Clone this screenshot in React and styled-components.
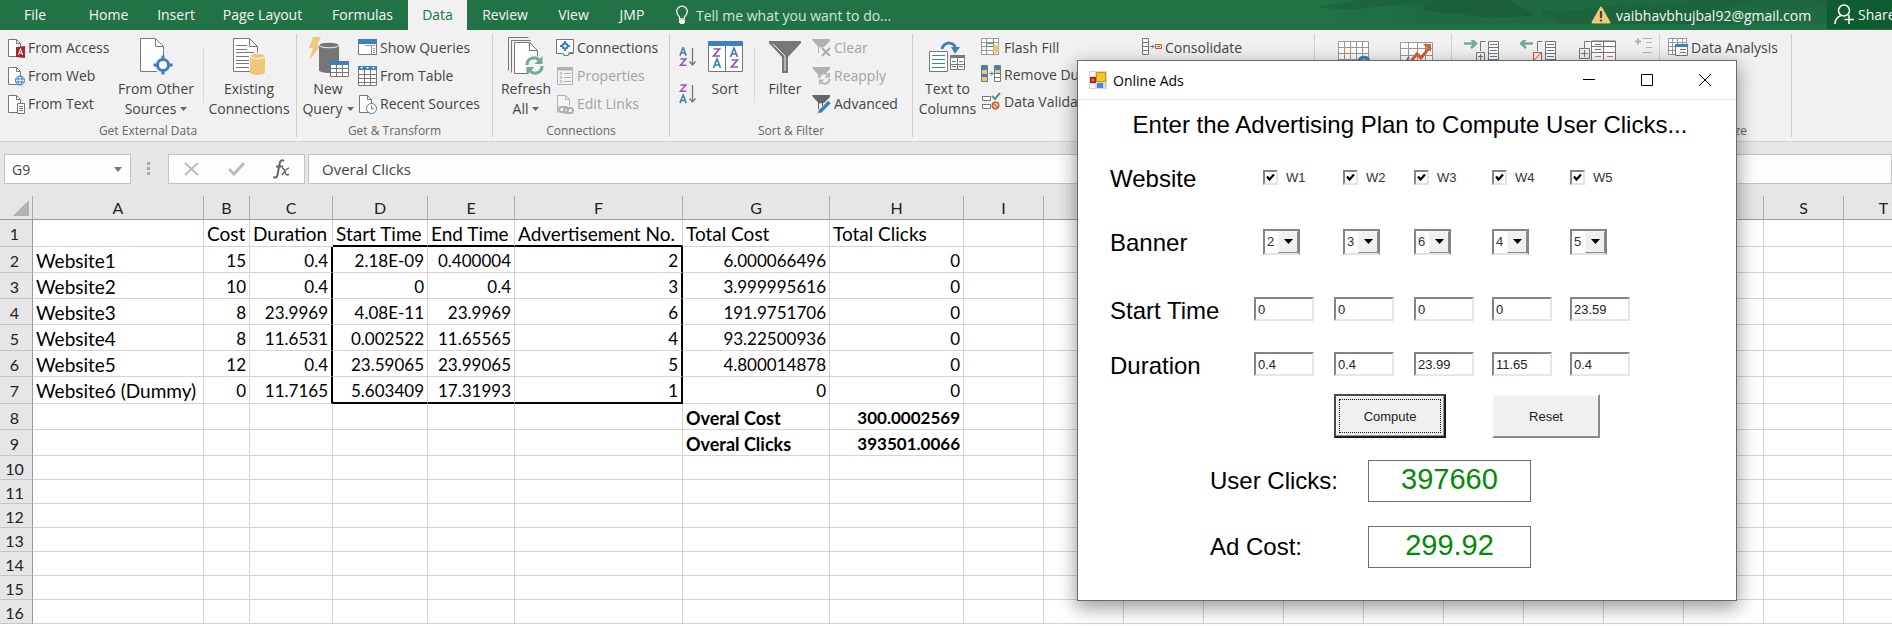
import React from "react";
import styled, { createGlobalStyle, css } from "styled-components";

const UI = `"Open Sans", "Noto Sans", sans-serif`;
const SHEET = `Lato, "Open Sans", sans-serif`;
const FORM = `"Liberation Sans", Arial, sans-serif`;
const GREEN = "#217346";

const GlobalStyle = createGlobalStyle`
  *, *::before, *::after { box-sizing: border-box; }
  body { margin: 0; background: #fff; }
  button, input, select { font: inherit; color: inherit; margin: 0; }
`;

const Page = styled.div`
  position: relative;
  height: 100vh;
  overflow: hidden;
  font-family: ${UI};
  font-size: 14px;
  color: #444;
  background: #fff;
`;

/* ---------- tab strip ---------- */

const TabStrip = styled.header`
  display: flex;
  position: relative;
  height: 30px;
  background: ${GREEN};
  color: #f3f8f5;
`;

const Backdrop = styled.svg`
  position: absolute;
  right: 0;
  top: 0;
`;

const Tabs = styled.nav`
  display: flex;
`;

const Tab = styled.button`
  width: ${(p) => p.$w}px;
  padding: 0;
  border: 0;
  line-height: 30px;
  white-space: nowrap;
  background: ${(p) => (p.$active ? "#f1f1f1" : "transparent")};
  color: ${(p) => (p.$active ? GREEN : "#f3f8f5")};
  ${(p) => p.$file && css`margin-right: 3px;`}
`;

const TellMe = styled.button`
  display: flex;
  align-items: center;
  gap: 8px;
  margin-left: 16px;
  padding: 0;
  border: 0;
  background: transparent;
  color: #d3e6da;
`;

const Account = styled.div`
  position: relative;
  display: flex;
  align-items: center;
  margin-left: auto;
  gap: 5px;
  white-space: nowrap;
`;

const Email = styled.span`
  margin-right: 6px;
  width: 200px;
`;

const Share = styled.button`
  display: flex;
  align-items: center;
  gap: 4px;
  width: 65px;
  height: 29px;
  padding: 0 0 0 7px;
  margin-bottom: 1px;
  border: 0;
  overflow: hidden;
  background: #0e5c2f;
  color: #f3f8f5;
  & > svg { flex: none; }
`;

/* ---------- ribbon ---------- */

const RibbonBar = styled.section`
  display: flex;
  height: 112px;
  padding-top: 4px;
  background: #f1f1f1;
  border-bottom: 1px solid #d2d2d2;
`;

const GroupBox = styled.div`
  display: flex;
  flex-direction: column;
  flex: none;
  width: ${(p) => p.$w}px;
  height: 103px;
  border-right: 1px solid #d0d0d0;
`;

const GroupBody = styled.div`
  display: flex;
  align-items: flex-start;
  flex: none;
  height: 89px;
  padding-left: ${(p) => p.$left || 0}px;
`;

const GroupLabel = styled.div`
  text-align: center;
  font-size: 12px;
  line-height: 16px;
  color: #666;
`;

const Stack = styled.div`
  display: flex;
  flex-direction: column;
  flex: none;
  width: ${(p) => p.$w}px;
`;

const SmallBtn = styled.button`
  display: flex;
  align-items: center;
  gap: 3px;
  height: ${(p) => (p.$tight ? 27 : 28)}px;
  padding: 0 0 1px;
  border: 0;
  background: transparent;
  white-space: nowrap;
  color: ${(p) => (p.$off ? "#a3a3a3" : "#444")};
  & > svg { flex: none; }
`;

const LargeBtn = styled.button`
  display: flex;
  flex-direction: column;
  align-items: center;
  flex: none;
  width: ${(p) => p.$w}px;
  padding: 0;
  border: 0;
  background: transparent;
  line-height: 20px;
  white-space: nowrap;
`;

const LargeArt = styled.span`
  display: flex;
  align-items: center;
  height: 45px;
`;

const Split = styled.div`
  flex: none;
  width: 1px;
  height: 55px;
  margin: 14px 3px 0;
  background: #dadada;
`;

const IconBtn = styled.button`
  display: flex;
  align-items: center;
  height: ${(p) => p.$h}px;
  padding: 0;
  border: 0;
  background: transparent;
`;

const ArtBtn = styled.button`
  display: flex;
  justify-content: center;
  flex: none;
  width: ${(p) => p.$w}px;
  padding: ${(p) => p.$top || 6}px 0 0;
  border: 0;
  background: transparent;
`;

/* ---------- formula bar ---------- */

const FormulaBar = styled.section`
  display: flex;
  height: 54px;
  padding: 12px 0 12px 4px;
  background: #e6e6e6;
`;

const Field = styled.div`
  display: flex;
  align-items: center;
  flex: ${(p) => (p.$w ? "none" : 1)};
  width: ${(p) => (p.$w ? p.$w + "px" : "auto")};
  height: 30px;
  border: 1px solid #c3c3c3;
  background: #fdfdfd;
`;

const NameInput = styled.input`
  width: 100px;
  padding: 0 0 0 7px;
  border: 0;
  background: transparent;
`;

const PlainButton = styled.button`
  display: flex;
  justify-content: center;
  align-items: center;
  flex: 1;
  padding: 0;
  border: 0;
  background: transparent;
`;

const FormulaInput = styled.input`
  flex: 1;
  padding: 0 0 0 13px;
  border: 0;
  background: transparent;
  font-size: 15px;
`;

const Grip = styled.svg`
  flex: none;
  margin: 8px 17px 0 15px;
`;

/* ---------- worksheet ---------- */

const COLS = [
  ["A", 171], ["B", 46], ["C", 83], ["D", 95], ["E", 87], ["F", 168], ["G", 147],
  ["H", 134], ["I", 80], ["J", 80], ["K", 80], ["L", 80], ["M", 80], ["N", 80],
  ["O", 80], ["P", 80], ["Q", 80], ["R", 80], ["S", 80], ["T", 80],
];
const SHEET_WIDTH = COLS.reduce((sum, c) => sum + c[1], 33);

const Sheet = styled.table`
  width: ${SHEET_WIDTH}px;
  table-layout: fixed;
  border-collapse: separate;
  border-spacing: 0;
  font-family: ${SHEET};
  line-height: 20px;
  color: #000;
`;

const ColHead = styled.th`
  height: 24px;
  padding: 0;
  border-right: 1px solid #ababab;
  border-bottom: 1px solid #9b9b9b;
  background: #e6e6e6;
  font-weight: 400;
  font-size: 16px;
  color: #222;
`;

const CornerArt = styled.svg`
  display: block;
  margin-left: 13px;
`;

const RowHead = styled.th`
  height: ${(p) => p.$h}px;
  padding: 2px 3px 0 0;
  border-right: 1px solid #9b9b9b;
  border-bottom: 1px solid #c6c6c6;
  background: #e6e6e6;
  font-weight: 400;
  font-size: 16px;
  color: #222;
`;

const Cell = styled.td`
  padding: 2px 3px 0;
  border-right: ${(p) => (p.$edgeR ? "2px solid #000" : "1px solid #d4d4d4")};
  border-bottom: ${(p) => (p.$edgeB ? "2px solid #000" : "1px solid #d4d4d4")};
  text-align: ${(p) => (p.$num ? "right" : "left")};
  font-size: ${(p) => (p.$num ? 17 : 19)}px;
  font-weight: ${(p) => (p.$bold ? 700 : 400)};
  white-space: nowrap;
  ${(p) => p.$bold && !p.$num && css`font-size: 18px;`}
`;

const ROWS = [
  [27, ["", "Cost", "Duration", "Start Time", "End Time", "Advertisement No.", "Total Cost", "Total Clicks"]],
  [26, ["Website1", "15", "0.4", "2.18E-09", "0.400004", "2", "6.000066496", "0"]],
  [26, ["Website2", "10", "0.4", "0", "0.4", "3", "3.999995616", "0"]],
  [26, ["Website3", "8", "23.9969", "4.08E-11", "23.9969", "6", "191.9751706", "0"]],
  [26, ["Website4", "8", "11.6531", "0.002522", "11.65565", "4", "93.22500936", "0"]],
  [26, ["Website5", "12", "0.4", "23.59065", "23.99065", "5", "4.800014878", "0"]],
  [27, ["Website6 (Dummy)", "0", "11.7165", "5.603409", "17.31993", "1", "0", "0"]],
  [26, ["", "", "", "", "", "", "Overal Cost", "300.0002569"], true],
  [26, ["", "", "", "", "", "", "Overal Clicks", "393501.0066"], true],
  [24, []], [24, []], [24, []], [24, []], [24, []], [24, []], [24, []],
];

/* ---------- dialog ---------- */

const Dialog = styled.section`
  position: absolute;
  left: 1077px;
  top: 60px;
  width: 660px;
  border: 1px solid #6a6a6a;
  background: #fff;
  box-shadow: 0 6px 18px 1px rgba(0, 0, 0, 0.4);
  color: #000;
`;

const TitleBar = styled.div`
  display: flex;
  align-items: center;
  height: 39px;
  padding: 0 2px 0 11px;
  border-bottom: 1px solid #e2e2e2;
`;

const DialogName = styled.h1`
  flex: 1;
  margin: 0 0 0 6px;
  font-size: 14px;
  font-weight: 400;
`;

const CaptionBtn = styled.button`
  display: flex;
  justify-content: center;
  align-items: center;
  width: 58px;
  height: 38px;
  padding: 0;
  border: 0;
  background: transparent;
`;

const AdForm = styled.form`
  padding-bottom: 23px;
  font-family: ${FORM};
  font-size: 24px;
`;

const Heading = styled.h2`
  margin: 0;
  padding-left: 6px;
  font-size: 24px;
  font-weight: 400;
  line-height: 49px;
  text-align: center;
  white-space: nowrap;
`;

const FormRow = styled.div`
  display: grid;
  grid-template-columns: ${(p) =>
    p.$narrow ? "153px 80px 71px 78px 78px 60px" : "144px 80px 80px 78px 78px 60px"};
  align-items: center;
  height: ${(p) => p.$h}px;
  margin-left: 32px;
`;

const RowName = styled.span`
  padding-top: 3px;
  white-space: nowrap;
`;

const CheckLabel = styled.label`
  display: flex;
  align-items: center;
  gap: 8px;
  font-size: 13px;
  color: #333;
`;

const Check = styled.input`
  appearance: none;
  width: 15px;
  height: 15px;
  border: 2px solid;
  border-color: #858585 #e3e3e3 #e3e3e3 #858585;
  background: #fff;
`;

const CheckWrap = styled.span`
  display: grid;
  & > * { grid-area: 1 / 1; }
  & > svg { z-index: 1; pointer-events: none; place-self: center; visibility: hidden; }
  & > input:checked + svg { visibility: visible; }
`;

const Combo = styled.span`
  display: grid;
  width: 37px;
  height: 26px;
  border: 2px solid;
  border-color: #858585 #858585 #e3e3e3 #858585;
  & > * { grid-area: 1 / 1; }
`;

const ComboSelect = styled.select`
  appearance: none;
  width: 33px;
  height: 22px;
  padding: 0 0 0 2px;
  border: 0;
  background: #fff;
  font-size: 13px;
  color: #333;
`;

const ComboArrow = styled.span`
  display: flex;
  justify-content: center;
  align-items: center;
  justify-self: end;
  width: 20px;
  height: 22px;
  border: 1px solid;
  border-color: #f4f4f4 #8a8a8a #8a8a8a #f4f4f4;
  background: #f0f0f0;
  pointer-events: none;
`;

const SmallInput = styled.input`
  width: 60px;
  height: 24px;
  padding: 0 0 0 2px;
  border: 2px solid;
  border-color: #858585 #e6e6e6 #e6e6e6 #858585;
  background: #fff;
  font-size: 13px;
  color: #222;
`;

const Buttons = styled.div`
  display: flex;
  align-items: center;
  gap: 46px;
  height: 58px;
  padding-left: 256px;
`;

const PushButton = styled.button`
  display: grid;
  width: ${(p) => (p.$focus ? 112 : 108)}px;
  height: 44px;
  padding: 2px;
  border: 2px solid;
  border-color: ${(p) => (p.$focus ? "#4a4a4a #1c1c1c #1c1c1c #4a4a4a" : "#fafafa #8a8a8a #8a8a8a #fafafa")};
  background: #f0f0f0;
  font-size: 13px;
  color: #222;
  box-shadow: ${(p) => (p.$focus ? "inset -1px -1px #999, inset 1px 1px #fff" : "none")};
`;

const FocusRing = styled.span`
  display: grid;
  place-items: center;
  margin: 1px;
  border: 1px ${(p) => (p.$on ? "dotted #111" : "solid transparent")};
`;

const ResultRow = styled.div`
  display: grid;
  grid-template-columns: 158px 163px;
  align-items: center;
  height: ${(p) => p.$h}px;
  padding-left: 132px;
`;

const Result = styled.output`
  height: 42px;
  border: 1px solid #6e6e6e;
  font-size: 29px;
  line-height: 37px;
  text-align: center;
  color: #068a06;
`;

/* ---------- icons ---------- */

const Svg = ({ w, h, children }) => (
  <svg width={w} height={h} viewBox={`0 0 ${w} ${h}`} fill="none" stroke="#777" strokeWidth="1" aria-hidden="true">
    {children}
  </svg>
);

const Page16 = ({ stroke = "#777", fill = "#fff" }) => (
  <g stroke={stroke}>
    <path fill={fill} d="M1.5 1.5h8l4 4v13h-12z" />
    <path d="M9.5 1.5v4h4" />
  </g>
);

const CaretArt = styled.svg`
  vertical-align: 3px;
`;

const Caret = () => (
  <CaretArt width="11" height="4" viewBox="0 0 11 4" aria-hidden="true">
    <path d="M4 0h7L7.500 4z" fill="#666" />
  </CaretArt>
);

const AccessIcon = () => (
  <Svg w={18} h={20}>
    <Page16 />
    <path d="M9 9l9-1v12l-9-1z" fill="#a4262c" stroke="none" />
    <path d="M11.500 17l2-6.500 2 6.500M12 15h3" stroke="#fff" />
  </Svg>
);
const WebIcon = () => (
  <Svg w={18} h={20}>
    <Page16 />
    <g stroke="#3f7fbf">
      <circle cx="13" cy="14.500" r="4.500" fill="#fff" />
      <ellipse cx="13" cy="14.500" rx="2" ry="4.500" />
      <path d="M8.500 13h9M8.500 16h9" />
    </g>
  </Svg>
);
const TextIcon = () => (
  <Svg w={18} h={20}>
    <Page16 />
    <path d="M10.500 9.500h7v10h-7z" fill="#fff" />
    <path d="M12 12.500h4M12 14.500h4M12 16.500h4" />
  </Svg>
);
const OtherSourcesIcon = () => (
  <Svg w={34} h={37}>
    <path d="M1.500.500h15l8 8v25h-23z" fill="#fff" />
    <path d="M16.500.500v8h8" />
    <circle cx="24" cy="27" r="9" fill="#f1f1f1" stroke="none" />
    <circle cx="24" cy="27" r="5.500" stroke="#3f7fbf" strokeWidth="3" fill="#fff" />
    <path d="M24 17.500v5M24 31.500v5M14.500 27h5M28.500 27h5" stroke="#3f7fbf" strokeWidth="3" />
  </Svg>
);
const Cylinder = ({ x, y, w, h, fill, top }) => (
  <g stroke="none">
    <path d={`M${x} ${y + 3}v${h - 6}c0 4 ${w} 4 ${w} 0v-${h - 6}z`} fill={fill} />
    <ellipse cx={x + w / 2} cy={y + 3} rx={w / 2} ry="2.800" fill={fill} stroke={top} />
  </g>
);
const ExistingIcon = () => (
  <Svg w={34} h={37}>
    <path d="M1.500.500h16l8 8v25h-24z" fill="#fff" />
    <path d="M17.500.500v8h8M4 7.500h11M4 11.500h11M4 14.500h18M4 18.500h13M4 22.500h13M4 25.500h13M4 29.500h13" />
    <Cylinder x={18} y={15} w={15} h={22} fill="#f0c67c" top="#fff" />
  </Svg>
);
const NewQueryIcon = () => (
  <Svg w={41} h={41}>
    <path d="M5 1h8l-4 8h4L1 24l4-12H1z" fill="#f0c67c" stroke="none" />
    <Cylinder x={11} y={6} w={20} h={31} fill="#767676" top="#f1f1f1" />
    <path d="M22.500 25.500h18v15h-18z" fill="#fff" />
    <path d="M22 25h19v4H22z" fill="#3f7fbf" stroke="none" />
    <path d="M22 32.500h19M22 36.500h19M28.500 29v12M34.500 29v12" />
  </Svg>
);
const ShowQueriesIcon = () => (
  <Svg w={19} h={18}>
    <path d="M.5.500h18v15h-18z" fill="#fff" />
    <path d="M0 0h19v5H0z" fill="#3f7fbf" stroke="none" />
    <path d="M13.500 7v8.500M15 9.500h2M15 11.500h2M15 13.500h2M7 6.500h10" stroke="#999" />
  </Svg>
);
const TableIcon = () => (
  <Svg w={19} h={20}>
    <path d="M.5.500h18v19h-18z" fill="#fff" />
    <path d="M0 0h19v4H0z" fill="#3f7fbf" stroke="none" />
    <path d="M2 1h3L3.500 3zM8 1h3L9.500 3zM14 1h3l-1.500 2z" fill="#fff" stroke="none" />
    <path d="M0 8.500h19M0 12.500h19M0 16.500h19M6.500 4v16M12.500 4v16" />
  </Svg>
);
const RecentIcon = () => (
  <Svg w={19} h={20}>
    <Page16 />
    <circle cx="13.500" cy="14.500" r="5" fill="#fff" stroke="#3f7fbf" />
    <path d="M13.500 11.500v3.500h2.500" />
  </Svg>
);
const SyncArrows = ({ color, x = 0, y = 0, s = 1 }) => (
  <g transform={`translate(${x} ${y}) scale(${s})`} stroke={color} strokeWidth="3">
    <path d="M2 9a7 7 0 0 1 12-5M17 10a7 7 0 0 1-12 5" />
    <path d="M17.500 0v8h-8zM1.500 19v-8h8z" fill={color} stroke="none" />
  </g>
);
const RefreshIcon = () => (
  <Svg w={38} h={39}>
    <path d="M1.500 33.500v-33h20M4.500 35.500v-32h19" />
    <path d="M7.500 5.500h15l8 8v23h-23z" fill="#fff" />
    <path d="M22.500 5.500v8h8" />
    <circle cx="28" cy="29" r="10" fill="#f1f1f1" stroke="none" />
    <SyncArrows color="#74a995" x={18} y={19} />
  </Svg>
);
const ConnectionsIcon = () => (
  <Svg w={18} h={18}>
    <path d="M.5.500h17v13H13l-1 3H8l-1-2H.500z" fill="#fff" />
    <path d="M0 14.500h7l2 2h3l2-2h4" />
    <circle cx="9" cy="7" r="2.500" stroke="#3f7fbf" strokeWidth="2" />
    <path d="M9 2v2M9 10v2M4 7h2M12 7h2" stroke="#3f7fbf" strokeWidth="2" />
  </Svg>
);
const PropertiesIcon = () => (
  <Svg w={18} h={18}>
    <g stroke="#b3b0b3">
      <path d="M1.500.500h15v17h-15z" fill="#f7f2f8" />
      <path d="M1 2h16" strokeWidth="3" />
      <circle cx="5" cy="6.500" r="1" /><circle cx="5" cy="10.500" r="1" /><circle cx="5" cy="14.500" r="1" />
      <path d="M8 6.500h7M8 10.500h7M8 14.500h7" />
    </g>
  </Svg>
);
const EditLinksIcon = () => (
  <Svg w={18} h={20}>
    <Page16 stroke="#b3b0b3" fill="#f7f2f8" />
    <path d="M2 12h16v8H2z" fill="#f1f1f1" stroke="none" />
    <g stroke="#b0b0b0" strokeWidth="2">
      <rect x="3" y="13" width="9" height="5" rx="2.500" />
      <rect x="8" y="14" width="9" height="5" rx="2.500" />
    </g>
  </Svg>
);
const LetterA = ({ x, y, s = 1 }) => (
  <path transform={`translate(${x} ${y}) scale(${s})`} d="M.5 9L4 0l3.500 9M2 6h4" stroke="#3f7fbf" strokeWidth="1.700" />
);
const LetterZ = ({ x, y, s = 1 }) => (
  <path transform={`translate(${x} ${y}) scale(${s})`} d="M.5 1h6L.500 8h6.500" stroke="#9356b8" strokeWidth="1.700" />
);
const SortAsc = ({ desc }) => (
  <Svg w={18} h={20}>
    {desc ? <LetterZ x={1} y={0} s={0.9} /> : <LetterA x={0.5} y={0.5} s={0.9} />}
    {desc ? <LetterA x={0.5} y={11} s={0.9} /> : <LetterZ x={1} y={11} s={0.9} />}
    <path d="M13.500 1v17M10.500 14.500l3 3.500 3-3.500" strokeWidth="1.300" />
  </Svg>
);
const SortIcon = () => (
  <Svg w={35} h={31}>
    <path d="M.5.500h34v30H.500z" fill="#fff" />
    <path d="M0 0h35v5H0z" fill="#3f7fbf" stroke="none" />
    <path d="M17.500 5v25" />
    <LetterZ x={5} y={7} /><LetterA x={5} y={18} />
    <LetterA x={22} y={7} /><LetterZ x={23} y={18} />
  </Svg>
);
const FilterIcon = () => (
  <Svg w={32} h={32}>
    <path d="M0 0h32v2L19 16v16h-6V16L0 2z" fill="#777" stroke="none" />
    <path d="M4 3l12 12v15" stroke="#f1f1f1" />
  </Svg>
);
const Funnel = ({ color }) => (
  <g stroke={color}>
    <path d="M0 1h18v2l-6 6-5 .500L1 3z" fill={color} stroke="none" />
    <path d="M6.500 8v7M10.500 9v3" />
  </g>
);
const ClearIcon = () => (
  <Svg w={19} h={20}><Funnel color="#b0b0b0" /><path d="M10 10l8 8M18 10l-8 8" stroke="#aaa" strokeWidth="2" /></Svg>
);
const ReapplyIcon = () => (
  <Svg w={19} h={20}><Funnel color="#b0b0b0" /><circle cx="12" cy="13" r="6" fill="#f1f1f1" stroke="none" /><SyncArrows color="#b4b4b4" x={6} y={6} s={0.68} /></Svg>
);
const AdvancedIcon = () => (
  <Svg w={19} h={20}><Funnel color="#666" /><path d="M17.500 8l-10 10" stroke="#3f7fbf" strokeWidth="3.500" /><path d="M8 15l2 2-5 3z" fill="#3f7fbf" stroke="none" /></Svg>
);
const TextColumnsIcon = () => (
  <Svg w={37} h={31}>
    <path d="M.5 10.500h18v20H.500z" fill="#fff" />
    <path d="M3 14.500h13M3 18.500h13M3 22.500h13M3 26.500h13" stroke="#3f7fbf" />
    <path d="M21.500 14.500h14v14h-14zM28.500 17v11M21 23.500h15" fill="#fff" />
    <path d="M21 14h15v3H21z" fill="#777" stroke="none" />
    <path d="M23 20.500h4M30 20.500h4M23 25.500h4M30 25.500h4" stroke="#3f7fbf" />
    <path d="M13 8c2-8 13-8 14 1" stroke="#3f7fbf" strokeWidth="3" />
    <path d="M22 6h9l-5 7z" fill="#3f7fbf" stroke="none" />
  </Svg>
);
const FlashFillIcon = () => (
  <Svg w={20} h={19}>
    <path d="M.5.500h17v16H.500zM0 4.500h18M0 8.500h18M0 12.500h18M5.500 0v17M12.500 0v17" fill="#fff" stroke="#999" />
    <path d="M5.500 5.500h7v3h-7z" stroke="#4e9a7c" fill="#fff" />
    <path d="M13 7h6l-2 4h2l-7 8 2-6h-2z" fill="#f0c67c" stroke="none" />
  </Svg>
);
const DuplicatesIcon = () => (
  <Svg w={20} h={18}>
    <path d="M.5.500h6v16h-6zM13.500.500h6v16h-6z" fill="#fff" />
    <path d="M1 1h5v4H1zM1 9h5v3H1z" fill="#3f7fbf" stroke="none" />
    <path d="M1 5h5v4H1zM1 12h5v4H1zM14 5h5v3h-5z" fill="#f0c67c" stroke="none" />
    <path d="M14 1h5v4h-5z" fill="#3f7fbf" stroke="none" />
    <path d="M14 8.500h5M14 12.500h5" />
    <path d="M8 8.500h4M10 6.500l2 2-2 2" stroke="#3f7fbf" />
  </Svg>
);
const ValidationIcon = () => (
  <Svg w={20} h={18}>
    <path d="M1.500 4.500h8v4h-8zM1.500 12.500h8v4h-8z" fill="#fff" />
    <path d="M11 4l3 3 5-6" stroke="#4e9a7c" strokeWidth="2" />
    <circle cx="14.500" cy="13.500" r="3.200" stroke="#d8512e" strokeWidth="1.500" />
    <path d="M12.500 11.500l4 4" stroke="#d8512e" strokeWidth="1.500" />
  </Svg>
);
const ConsolidateIcon = () => (
  <Svg w={20} h={18}>
    <path d="M.5.500h6v16h-6zM0 4.500h7M0 8.500h7M0 12.500h7" fill="#fff" />
    <path d="M8 8.500h3.500M10 6.500l2 2-2 2" stroke="#3f7fbf" />
    <path d="M13.500 6.500h6v4h-6zM15 8.500h3" stroke="#d8512e" />
  </Svg>
);
const WhatIfIcon = () => (
  <Svg w={32} h={30}>
    <path d="M.5.500h30v28H.500zM0 6.500h30M0 12.500h30M0 18.500h30M6.500 0v28M12.500 0v28M18.500 0v28M24.500 0v28" fill="#fff" stroke="#999" />
    <path d="M6.500 6.500h6v6h-6z" stroke="#e08a3c" fill="#fff" />
    <path d="M21 20c1-5 9-5 10 0" stroke="#3f7fbf" strokeWidth="3" />
  </Svg>
);
const ForecastIcon = () => (
  <Svg w={33} h={30}>
    <path d="M.5 1.500h32v28H.500zM0 7.500h33M0 14.500h33M8.500 1v28M17.500 1v28M25.500 1v28" fill="#fff" stroke="#999" />
    <path d="M11 20l6-7 4 4 9-11" stroke="#d65f3d" strokeWidth="3" />
    <path d="M23 3h8v8z" fill="#d65f3d" stroke="none" />
    <path d="M2 19l3 3 4-6" stroke="#3f7fbf" strokeWidth="2" />
  </Svg>
);
const OutlineIcon = ({ kind }) => (
  <Svg w={37} h={30}>
    {kind === "group" && <path d="M1 3.500h12M8 -1l5 4.500-5 4.500" stroke="#74a995" strokeWidth="2.500" />}
    {kind === "ungroup" && <path d="M1 3.500h12M6 -1L1 3.500 6 8" stroke="#74a995" strokeWidth="2.500" />}
    {kind === "subtotal" ? (
      <>
        <path d="M12.500 1v24h24V1zM12 6.500h25M12 12.500h25M24.500 1v24" fill="#fff" />
        <path d="M12 1.500h25" />
        <path d="M16 4.500h6M16 9.500h6" stroke="#3f7fbf" />
        <path d="M16 16.500h6M28 16.500h6" stroke="#d98244" />
        <path d="M.5 8.500h10v10H.500zM5.500 10v7M2 13.500h7M5.500 8V1.500h6" />
      </>
    ) : (
      <>
        <path d="M25.500 1.500h10v26h-10zM25 7.500h11M25 13.500h11M25 19.500h11" fill="#fff" />
        <path d="M27 4.500h7M27 10.500h7M27 16.500h7" stroke="#3f7fbf" />
        <path d="M17.500 11V1.500h5M13.500 12.500h8v8h-8z" />
        {kind === "group" ? <path d="M17.500 14v6M15 16.500h5" /> : <path d="M13.500 12.500h8v8h-8zM14 20l7-7" stroke="#d8512e" />}
      </>
    )}
  </Svg>
);
const DetailIcon = () => (
  <Svg w={17} h={17}>
    <path d="M0 4.500h6M3 1.500v6" stroke="#b3b3b3" strokeWidth="2" />
    <path d="M7 1.500h10M11 5.500h6M11 10.500h6M7 15.500h10" stroke="#b3b3b3" />
  </Svg>
);
const AnalysisIcon = () => (
  <Svg w={20} h={19}>
    <path d="M.5.500h18v16H.500zM0 4.500h18M0 8.500h18M0 12.500h18M4.500 0v17M9.500 0v17M14.500 0v17" fill="#fff" stroke="#999" />
    <path d="M7.500 6.500h12v11h-12z" fill="#fff" />
    <path d="M7 6h13v3H7z" fill="#3f7fbf" stroke="none" />
    <path d="M12 11.500h6M12 14.500h6" />
  </Svg>
);
const BulbIcon = () => (
  <Svg w={12} h={20}>
    <path d="M3.500 14v-2C1.500 10 .7 8.500.700 6.500a5.300 5.300 0 0 1 10.600 0c0 2-.8 3.500-2.800 5.500v2z" stroke="#f3f8f5" strokeWidth="1.300" />
    <path d="M3 15h6v3H3zM4 18h4v1H4z" fill="#fff" stroke="none" />
  </Svg>
);
const WarningIcon = () => (
  <Svg w={20} h={18}>
    <path d="M10 1.500L1.500 16.500h17z" fill="#f0c67c" stroke="#f0c67c" strokeWidth="2" strokeLinejoin="round" />
    <path d="M10 5v7M10 13.500v2" stroke="#444" strokeWidth="2.200" />
  </Svg>
);
const PersonIcon = () => (
  <Svg w={20} h={21}>
    <g stroke="#fff" strokeWidth="1.500">
      <circle cx="10" cy="6.500" r="5.500" />
      <path d="M1 20c0-4 2-7 6-8.500M15 11v9M10.500 15.500H20" />
    </g>
  </Svg>
);
const AppIcon = () => (
  <Svg w={18} h={18}>
    <path d="M0 0h18v18H0z" fill="#d5d5d8" stroke="none" />
    <path d="M1 1h5v4H1zM1 13h5v4H1z" fill="#fff" stroke="none" />
    <path d="M7.500 1.500h9v9h-9z" fill="#f5c526" stroke="#c48f10" />
    <path d="M1 6h6v6H1z" fill="#b3261a" stroke="none" />
    <path d="M3 8h2v2H3z" fill="#e88" stroke="none" />
    <path d="M8 12h6v5H8z" fill="#4a84e0" stroke="none" />
  </Svg>
);

/* ---------- parts ---------- */

const Small = ({ icon, children, ...rest }) => (
  <SmallBtn type="button" {...rest}>{icon}<span>{children}</span></SmallBtn>
);

const Large = ({ w, icon, line1, line2, menu }) => (
  <LargeBtn type="button" $w={w}>
    <LargeArt>{icon}</LargeArt>
    <span>{line1}</span>
    {line2 && <span>{line2}{menu && <Caret />}</span>}
  </LargeBtn>
);

const Group = ({ w, left, label, children }) => (
  <GroupBox $w={w}>
    <GroupBody $left={left}>{children}</GroupBody>
    {label && <GroupLabel>{label}</GroupLabel>}
  </GroupBox>
);

const TABS = [
  ["File", 70], ["Home", 71], ["Insert", 64], ["Page Layout", 109], ["Formulas", 91],
  ["Data", 59], ["Review", 76], ["View", 61], ["JMP", 56],
];

function TopBar() {
  return (
    <TabStrip>
      <Backdrop width="582" height="24" viewBox="0 0 582 24" aria-hidden="true">
        <defs>
          <linearGradient id="fade">
            <stop offset="0" stopColor="#1f6b41" stopOpacity="0" />
            <stop offset=".2" stopColor="#1f6b41" />
          </linearGradient>
        </defs>
        <path d="M0 0h582v24H0z" fill="url(#fade)" />
        <g fill="#1c6039">
          <path d="M8 7c20-4 26-3 40-7h100c-24 8-60 2-90 8-20 3-34 1-50-1z" opacity=".7" />
          <path d="M112 9c14 6 30 2 46 6s30 2 62 1c10-4-10-6-20-16H134c-14 3-22 4-22 9z" />
          <path d="M232 10c40 4 60-6 90-5s50-2 60-5h58c-30 8-20 18-50 24H250c-10-6-20-8-18-14z" opacity=".7" />
          <path d="M400 0h120c-10 12-70 12-120 0z" opacity=".6" />
        </g>
      </Backdrop>
      <Tabs>
        {TABS.map(([name, w]) => (
          <Tab key={name} type="button" $w={w} $active={name === "Data"} $file={name === "File"}>{name}</Tab>
        ))}
      </Tabs>
      <TellMe type="button"><BulbIcon /><span>Tell me what you want to do...</span></TellMe>
      <Account>
        <WarningIcon />
        <Email>vaibhavbhujbal92@gmail.com</Email>
        <Share type="button"><PersonIcon /><span>Share</span></Share>
      </Account>
    </TabStrip>
  );
}

function Ribbon() {
  return (
    <RibbonBar>
      <Group w={297} left={7} label="Get External Data">
        <Stack $w={105}>
          <Small icon={<AccessIcon />}>From Access</Small>
          <Small icon={<WebIcon />}>From Web</Small>
          <Small icon={<TextIcon />}>From Text</Small>
        </Stack>
        <Large w={88} icon={<OtherSourcesIcon />} line1="From Other" line2="Sources" menu />
        <Split />
        <Large w={84} icon={<ExistingIcon />} line1="Existing" line2="Connections" />
      </Group>
      <Group w={196} left={1} label="Get & Transform">
        <Large w={60} icon={<NewQueryIcon />} line1="New" line2="Query" menu />
        <Stack $w={134}>
          <Small icon={<ShowQueriesIcon />}>Show Queries</Small>
          <Small icon={<TableIcon />}>From Table</Small>
          <Small icon={<RecentIcon />}>Recent Sources</Small>
        </Stack>
      </Group>
      <Group w={177} left={3} label="Connections">
        <Large w={60} icon={<RefreshIcon />} line1="Refresh" line2="All" menu />
        <Stack $w={110}>
          <Small icon={<ConnectionsIcon />}>Connections</Small>
          <Small icon={<PropertiesIcon />} $off>Properties</Small>
          <Small icon={<EditLinksIcon />} $off>Edit Links</Small>
        </Stack>
      </Group>
      <Group w={243} left={9} label="Sort & Filter">
        <Stack $w={20}>
          <IconBtn type="button" $h={46} aria-label="Sort A to Z"><SortAsc /></IconBtn>
          <IconBtn type="button" $h={28} aria-label="Sort Z to A"><SortAsc desc /></IconBtn>
        </Stack>
        <Large w={52} icon={<SortIcon />} line1="Sort" />
        <Split />
        <Large w={54} icon={<FilterIcon />} line1="Filter" />
        <Stack $w={98}>
          <Small icon={<ClearIcon />} $off>Clear</Small>
          <Small icon={<ReapplyIcon />} $off>Reapply</Small>
          <Small icon={<AdvancedIcon />}>Advanced</Small>
        </Stack>
      </Group>
      <Group w={402} left={1}>
        <Large w={67} icon={<TextColumnsIcon />} line1="Text to" line2="Columns" />
        <Stack $w={161}>
          <Small $tight icon={<FlashFillIcon />}>Flash Fill</Small>
          <Small $tight icon={<DuplicatesIcon />}>Remove Duplicates</Small>
          <Small $tight icon={<ValidationIcon />}>Data Validation</Small>
        </Stack>
        <Stack $w={130}>
          <Small $tight icon={<ConsolidateIcon />}>Consolidate</Small>
        </Stack>
      </Group>
      <Group w={137} left={8}>
        <ArtBtn type="button" $w={62} aria-label="What-If Analysis" $top={7}><WhatIfIcon /></ArtBtn>
        <ArtBtn type="button" $w={62} aria-label="Forecast Sheet" $top={7}><ForecastIcon /></ArtBtn>
      </Group>
      <Group w={208}>
        <ArtBtn type="button" $w={58} aria-label="Group"><OutlineIcon kind="group" /></ArtBtn>
        <ArtBtn type="button" $w={56} aria-label="Ungroup"><OutlineIcon kind="ungroup" /></ArtBtn>
        <ArtBtn type="button" $w={62} aria-label="Subtotal"><OutlineIcon kind="subtotal" /></ArtBtn>
        <ArtBtn type="button" $w={31} aria-label="Show Detail" $top={3}><DetailIcon /></ArtBtn>
      </Group>
      <Group w={132} left={8} label="Analyze">
        <Stack $w={120}>
          <Small $tight icon={<AnalysisIcon />}>Data Analysis</Small>
        </Stack>
      </Group>
    </RibbonBar>
  );
}

function Formula() {
  return (
    <FormulaBar>
      <Field $w={127}>
        <NameInput aria-label="Name box" defaultValue="G9" />
        <PlainButton type="button" aria-label="Names">
          <svg width="8" height="5"><path d="M0 0h8L4 5z" fill="#777" /></svg>
        </PlainButton>
      </Field>
      <Grip width="5" height="14"><path d="M1 0h3v3H1zM1 5h3v3H1zM1 10h3v3H1z" fill="#aaa" /></Grip>
      <Field $w={137}>
        <PlainButton type="button" aria-label="Cancel">
          <svg width="16" height="14"><path d="M1 1l13 12M14 1L1 13" stroke="#bdbdbd" strokeWidth="2" fill="none" /></svg>
        </PlainButton>
        <PlainButton type="button" aria-label="Enter">
          <svg width="17" height="14"><path d="M1 7l5 5L16 1" stroke="#bdbdbd" strokeWidth="3" fill="none" /></svg>
        </PlainButton>
        <PlainButton type="button" aria-label="Insert function">
          <svg width="18" height="20" fill="none" stroke="#666">
            <path d="M11 2c-2-2-4 0-4.500 3L4.500 16c-.5 2.500-2 3-4 2M3 7.500h7" strokeWidth="2" />
            <path d="M9 9c2 0 2 1 3 4s1.500 3.500 4 2.500M16 9c-2 0-4 3-7 7" strokeWidth="1.500" />
          </svg>
        </PlainButton>
      </Field>
      <svg width="3" height="1" aria-hidden="true" />
      <Field>
        <FormulaInput aria-label="Formula" defaultValue="Overal Clicks" />
      </Field>
    </FormulaBar>
  );
}

function Worksheet() {
  return (
    <Sheet>
      <colgroup>
        <col style={{ width: 33 }} />
        {COLS.map(([c, w]) => <col key={c} style={{ width: w }} />)}
      </colgroup>
      <thead>
        <tr>
          <ColHead aria-label="Select all">
            <CornerArt width="16" height="16"><path d="M16 0v16H0z" fill="#b2b2b2" /></CornerArt>
          </ColHead>
          {COLS.map(([c]) => <ColHead key={c} scope="col">{c}</ColHead>)}
        </tr>
      </thead>
      <tbody>
        {ROWS.map(([h, values, bold], r) => (
          <tr key={r}>
            <RowHead scope="row" $h={h}>{r + 1}</RowHead>
            {COLS.map(([c], i) => {
              const boxedRow = r >= 1 && r <= 6;
              const boxedCol = i >= 3 && i <= 5;
              return (
                <Cell
                  key={c}
                  $num={r > 0 && /^\d/.test(values[i] || "")}
                  $bold={bold}
                  $edgeR={boxedRow && (i === 2 || i === 5)}
                  $edgeB={boxedCol && (r === 0 || r === 6)}
                >
                  {values[i]}
                </Cell>
              );
            })}
          </tr>
        ))}
      </tbody>
    </Sheet>
  );
}

const BANNERS = ["2", "3", "6", "4", "5"];
const STARTS = ["0", "0", "0", "0", "23.59"];
const DURATIONS = ["0.4", "0.4", "23.99", "11.65", "0.4"];

function OnlineAds() {
  return (
    <Dialog role="dialog" aria-label="Online Ads">
      <TitleBar>
        <AppIcon />
        <DialogName>Online Ads</DialogName>
        <CaptionBtn type="button" aria-label="Minimize">
          <svg width="12" height="12"><path d="M0 5.500h12" stroke="#000" /></svg>
        </CaptionBtn>
        <CaptionBtn type="button" aria-label="Maximize">
          <svg width="12" height="12"><path d="M.5.500h11v11H.500z" stroke="#000" fill="none" /></svg>
        </CaptionBtn>
        <CaptionBtn type="button" aria-label="Close">
          <svg width="12" height="12"><path d="M0 0l12 12M12 0L0 12" stroke="#000" /></svg>
        </CaptionBtn>
      </TitleBar>
      <AdForm onSubmit={(e) => e.preventDefault()}>
        <Heading>Enter the Advertising Plan to Compute User Clicks...</Heading>
        <FormRow $h={57} $narrow>
          <RowName>Website</RowName>
          {BANNERS.map((_, i) => (
            <CheckLabel key={i}>
              <CheckWrap>
                <Check type="checkbox" defaultChecked />
                <svg width="9" height="9"><path d="M1 3.500l2.500 3L8 1.500" stroke="#000" strokeWidth="2.200" fill="none" /></svg>
              </CheckWrap>
              W{i + 1}
            </CheckLabel>
          ))}
        </FormRow>
        <FormRow $h={71} $narrow>
          <RowName>Banner</RowName>
          {BANNERS.map((v, i) => (
            <Combo key={i}>
              <ComboSelect aria-label={`Banner W${i + 1}`} defaultValue={v}>
                {["1", "2", "3", "4", "5", "6"].map((n) => <option key={n}>{n}</option>)}
              </ComboSelect>
              <ComboArrow><svg width="9" height="5"><path d="M0 0h9L4.500 5z" fill="#000" /></svg></ComboArrow>
            </Combo>
          ))}
        </FormRow>
        <FormRow $h={64}>
          <RowName>Start Time</RowName>
          {STARTS.map((v, i) => <SmallInput key={i} aria-label={`Start Time W${i + 1}`} defaultValue={v} />)}
        </FormRow>
        <FormRow $h={46}>
          <RowName>Duration</RowName>
          {DURATIONS.map((v, i) => <SmallInput key={i} aria-label={`Duration W${i + 1}`} defaultValue={v} />)}
        </FormRow>
        <Buttons>
          <PushButton type="submit" $focus><FocusRing $on>Compute</FocusRing></PushButton>
          <PushButton type="reset"><FocusRing>Reset</FocusRing></PushButton>
        </Buttons>
        <ResultRow $h={72}>
          <label htmlFor="clicks">User Clicks:</label>
          <Result id="clicks">397660</Result>
        </ResultRow>
        <ResultRow $h={60}>
          <label htmlFor="cost">Ad Cost:</label>
          <Result id="cost">299.92</Result>
        </ResultRow>
      </AdForm>
    </Dialog>
  );
}

export default function App() {
  return (
    <Page>
      <GlobalStyle />
      <TopBar />
      <Ribbon />
      <Formula />
      <Worksheet />
      <OnlineAds />
    </Page>
  );
}
